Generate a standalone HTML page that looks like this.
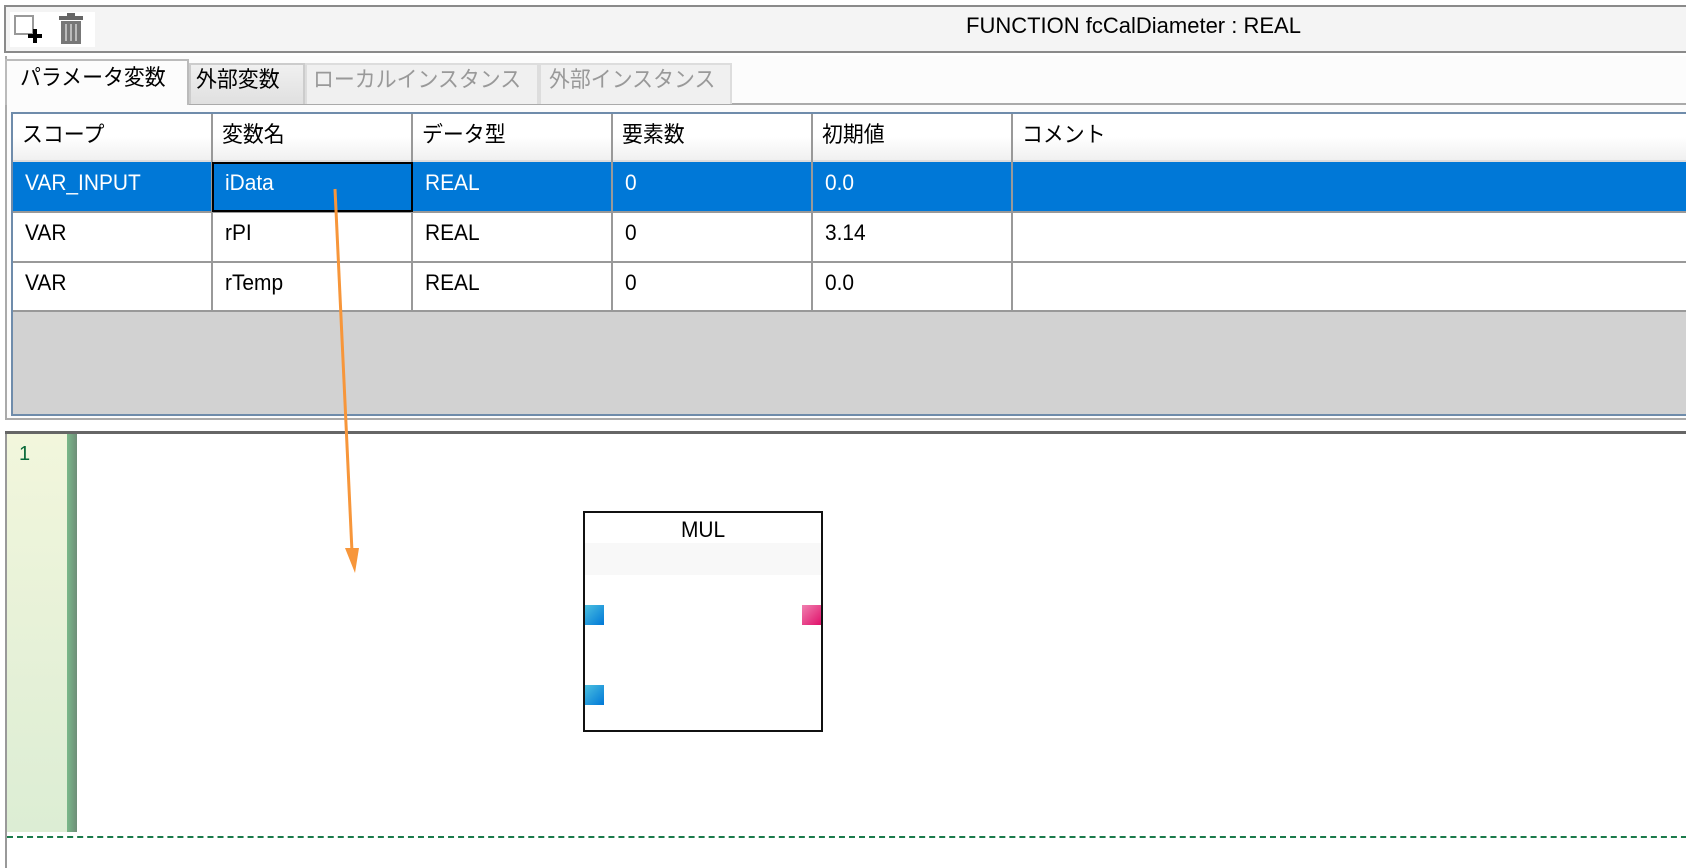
<!DOCTYPE html>
<html><head><meta charset="utf-8">
<style>
*{margin:0;padding:0;box-sizing:border-box}
body{width:1686px;height:868px;background:#fff;position:relative;overflow:hidden;font-family:"Liberation Sans","Noto Sans CJK JP",sans-serif;color:#000}
.a{position:absolute}
.t{font-size:22px;line-height:26px;transform:scaleX(0.95);transform-origin:left center;white-space:nowrap}
</style></head><body>
<!-- toolbar -->
<div class="a" style="left:4px;top:5px;width:1700px;height:48px;background:#f4f4f4;border:2px solid #8a8a8a;border-right:none"></div>
<div class="a" style="left:10px;top:12px;width:85px;height:35px;background:#fff"></div>
<svg class="a" style="left:12px;top:12px" width="36" height="36"><rect x="3" y="4" width="18" height="18" fill="#fff" stroke="#999" stroke-width="2"/><path d="M16 24h14M23 17v14" stroke="#000" stroke-width="4"/></svg>
<svg class="a" style="left:56px;top:12px" width="32" height="34"><rect x="3" y="4" width="24" height="4" fill="#666"/><rect x="11" y="1" width="8" height="4" fill="#666"/><rect x="5" y="9" width="20" height="23" fill="#777"/><path d="M10 12v17M15 12v17M20 12v17" stroke="#bbb" stroke-width="2"/></svg>
<div class="a t" style="left:966px;top:13px;transform:scaleX(1)">FUNCTION fcCalDiameter : REAL</div>
<!-- tab panel -->
<div class="a" style="left:5px;top:56px;width:1700px;height:364px;background:#fcfcfc;border:2px solid #aaa;border-right:none;border-top:none"></div>
<div class="a" style="left:5px;top:103px;width:1700px;height:2px;background:#aaa"></div>
<div class="a" style="left:5px;top:59px;width:184px;height:46px;background:#fcfcfc;border:2px solid #bbb;border-bottom:none"></div>
<div class="a t" style="left:20px;top:65px">パラメータ変数</div>
<div class="a" style="left:189px;top:63px;width:116px;height:41px;background:linear-gradient(#f0f0f0,#e0e0e0);border:2px solid #ccc;border-bottom:none"></div>
<div class="a t" style="left:196px;top:67px">外部変数</div>
<div class="a" style="left:305px;top:63px;width:234px;height:41px;background:#f0f0f0;border:2px solid #ddd;border-bottom:none"></div>
<div class="a t" style="left:313px;top:67px;color:#999">ローカルインスタンス</div>
<div class="a" style="left:539px;top:63px;width:193px;height:41px;background:#f0f0f0;border:2px solid #ddd;border-bottom:none"></div>
<div class="a t" style="left:549px;top:67px;color:#999">外部インスタンス</div>
<!-- grid -->
<div class="a" style="left:11px;top:112px;width:1700px;height:304px;background:#d2d2d2;border:2px solid #6f8cab;border-right:none"></div>
<div class="a" style="left:13px;top:114px;width:1700px;height:48px;background:linear-gradient(#fff,#fff 50%,#f0f0f0);border-bottom:2px solid #ddd"></div>
<div class="a" style="left:13px;top:162px;width:1700px;height:49px;background:#0078d7"></div>
<div class="a" style="left:13px;top:211px;width:1700px;height:50px;background:#fff;border-top:2px solid #999"></div>
<div class="a" style="left:13px;top:261px;width:1700px;height:51px;background:#fff;border-top:2px solid #999;border-bottom:2px solid #999"></div>
<div class="a" style="left:211px;top:114px;width:2px;height:198px;background:#999"></div>
<div class="a" style="left:411px;top:114px;width:2px;height:198px;background:#999"></div>
<div class="a" style="left:611px;top:114px;width:2px;height:198px;background:#999"></div>
<div class="a" style="left:811px;top:114px;width:2px;height:198px;background:#999"></div>
<div class="a" style="left:1011px;top:114px;width:2px;height:198px;background:#999"></div>
<div class="a" style="left:212px;top:162px;width:201px;height:50px;border:2px solid #000"></div>
<div class="a t" style="left:22px;top:122px">スコープ</div>
<div class="a t" style="left:222px;top:122px">変数名</div>
<div class="a t" style="left:422px;top:122px">データ型</div>
<div class="a t" style="left:622px;top:122px">要素数</div>
<div class="a t" style="left:822px;top:122px">初期値</div>
<div class="a t" style="left:1022px;top:122px">コメント</div>
<div class="a t" style="left:25px;top:170px;color:#fff">VAR_INPUT</div>
<div class="a t" style="left:225px;top:170px;color:#fff">iData</div>
<div class="a t" style="left:425px;top:170px;color:#fff">REAL</div>
<div class="a t" style="left:625px;top:170px;color:#fff">0</div>
<div class="a t" style="left:825px;top:170px;color:#fff">0.0</div>
<div class="a t" style="left:25px;top:220px">VAR</div>
<div class="a t" style="left:225px;top:220px">rPI</div>
<div class="a t" style="left:425px;top:220px">REAL</div>
<div class="a t" style="left:625px;top:220px">0</div>
<div class="a t" style="left:825px;top:220px">3.14</div>
<div class="a t" style="left:25px;top:270px">VAR</div>
<div class="a t" style="left:225px;top:270px">rTemp</div>
<div class="a t" style="left:425px;top:270px">REAL</div>
<div class="a t" style="left:625px;top:270px">0</div>
<div class="a t" style="left:825px;top:270px">0.0</div>
<!-- editor -->
<div class="a" style="left:5px;top:431px;width:1700px;height:3px;background:#666"></div>
<div class="a" style="left:5px;top:434px;width:2px;height:434px;background:#999"></div>
<div class="a" style="left:7px;top:434px;width:60px;height:398px;background:linear-gradient(#f2f6dc,#dcedd4)"></div>
<div class="a" style="left:67px;top:434px;width:10px;height:398px;background:linear-gradient(90deg,#7ab88a,#6e8e78)"></div>
<div class="a" style="left:19px;top:443px;font-size:20px;color:#0a6a3a">1</div>
<div class="a" style="left:7px;top:836px;width:1700px;height:0;border-top:2px dashed #1a7a4a"></div>
<!-- MUL -->
<div class="a" style="left:583px;top:511px;width:240px;height:221px;border:2px solid #111;background:#fff"></div>
<div class="a" style="left:585px;top:543px;width:236px;height:32px;background:#f8f8f8"></div>
<div class="a t" style="left:681px;top:517px">MUL</div>
<div class="a" style="left:585px;top:605px;width:19px;height:20px;background:linear-gradient(135deg,#4cc0e0,#0078d7)"></div>
<div class="a" style="left:585px;top:685px;width:19px;height:20px;background:linear-gradient(135deg,#4cc0e0,#0078d7)"></div>
<div class="a" style="left:802px;top:605px;width:19px;height:20px;background:linear-gradient(135deg,#f080b0,#e0106a)"></div>
<!-- arrow -->
<svg class="a" style="left:0;top:0" width="1686" height="868"><path d="M335 189 L352 552" stroke="#f7963a" stroke-width="3"/><path d="M345 548 L359 548 L355 573 Z" fill="#f7963a"/></svg>
</body></html>
